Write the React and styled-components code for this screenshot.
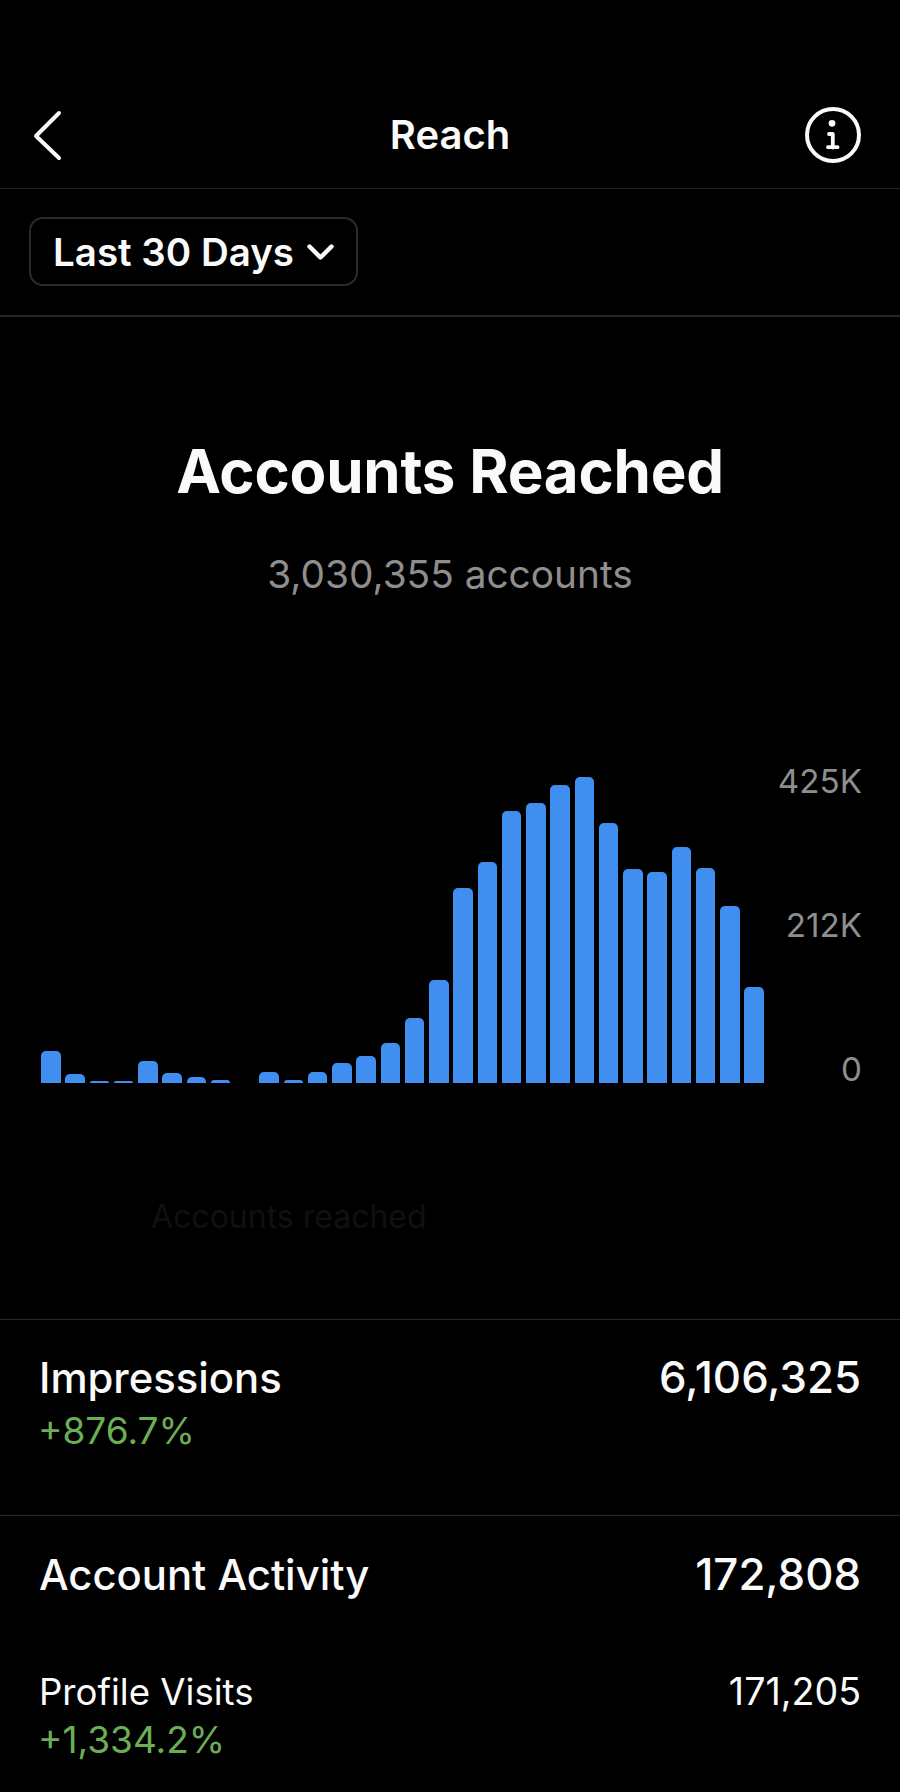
import styled, { createGlobalStyle } from "styled-components";

const GlobalStyle = createGlobalStyle`
  html, body {
    margin: 0;
    background: #000;
  }
  body {
    font-family: "Inter", "Liberation Sans", sans-serif;
    color: #fafafa;
  }
`;

const Page = styled.div`
  width: 900px;
  height: 1792px;
  overflow: hidden;
  background: #000;
`;

const NavBar = styled.header`
  display: grid;
  grid-template-columns: 1fr auto 1fr;
  align-items: center;
  height: 106px;
  padding: 82px 39px 0;
  border-bottom: 1px solid #222;
`;

const NavTitle = styled.h1`
  margin: 0;
  font-size: 40px;
  line-height: 46px;
  font-weight: 600;
`;

const NavIcon = styled.button`
  display: flex;
  padding: 0;
  border: 0;
  background: none;
  color: #fafafa;
  justify-self: ${(p) => (p.$end ? "end" : "start")};
  margin-left: ${(p) => (p.$end ? 0 : -6)}px;
`;

const FilterBar = styled.div`
  height: 98px;
  padding: 28px 0 0 29px;
  border-bottom: 2px solid #262626;
`;

const FilterButton = styled.button`
  display: inline-flex;
  align-items: center;
  gap: 13px;
  height: 69px;
  padding: 0 22px 0 22px;
  box-sizing: border-box;
  border: 2px solid #2b2b2b;
  border-radius: 14px;
  background: #000;
  color: #fafafa;
  font-family: inherit;
  font-size: 38.5px;
  line-height: 44px;
  font-weight: 600;
`;

const Summary = styled.section`
  padding-top: 118px;
  text-align: center;
`;

const SummaryTitle = styled.h2`
  margin: 0;
  font-size: 60px;
  line-height: 72px;
  font-weight: 700;
  letter-spacing: -0.2px;
`;

const SummaryCount = styled.p`
  margin: 44px 0 0;
  font-size: 38.8px;
  line-height: 46px;
  color: #8e8e8e;
`;

const Chart = styled.div`
  display: flex;
  justify-content: space-between;
  height: 320px;
  margin-top: 168px;
  padding: 0 38px 0 41px;
`;

const Bars = styled.div`
  display: grid;
  grid-template-columns: repeat(30, 1fr);
  column-gap: 4.75px;
  align-items: end;
  width: 723px;
  height: 318px;
`;

const Bar = styled.div`
  background: #408ff0;
  border-radius: 5px 5px 0 0;
`;

const Axis = styled.div`
  display: flex;
  flex-direction: column;
  justify-content: space-between;
  text-align: right;
  font-size: 33.2px;
  line-height: 32px;
  color: #8e8e8e;
`;

const GhostRow = styled.div`
  padding: 115px 0 85px 151px;
  font-size: 32px;
  line-height: 34px;
  color: #101010;
  border-bottom: 1px solid #2a2a2a;
`;

const Section = styled.section`
  padding: ${(p) => p.$padding};
  border-bottom: ${(p) => (p.$divided ? "1px solid #2a2a2a" : "none")};
`;

const Row = styled.div`
  display: flex;
  justify-content: space-between;
  align-items: center;
  margin-top: ${(p) => p.$gap || 0}px;
  line-height: 46px;
  font-weight: ${(p) => (p.$detail ? 400 : 500)};
  font-size: ${(p) => (p.$detail ? 36.6 : 41.8)}px;
`;

const Value = styled.span`
  font-size: ${(p) => (p.$detail ? 37.6 : 43.8)}px;
`;

const Change = styled.div`
  margin: ${(p) => p.$gap}px 0 0 -1px;
  font-size: 37px;
  line-height: 42px;
  color: #6bae55;
`;

const reachBars = [
  32, 9, 2, 2, 22, 10, 6, 3, 0, 11, 3, 11, 20, 27, 40, 65, 103, 195, 221, 272,
  280, 298, 306, 260, 214, 211, 236, 215, 177, 96,
];

function BackIcon() {
  return (
    <svg width="30" height="52" viewBox="0 0 30 52" fill="none">
      <path
        d="M26 4 3 27l23 22"
        stroke="currentColor"
        strokeWidth="4"
        strokeLinecap="round"
        strokeLinejoin="round"
      />
    </svg>
  );
}

function InfoIcon() {
  return (
    <svg width="56" height="56" viewBox="0 0 56 56" fill="none">
      <circle cx="28" cy="28" r="26" stroke="currentColor" strokeWidth="4" />
      <circle cx="27" cy="16.3" r="3.4" fill="currentColor" />
      <path
        d="M24 27h3.8v13.6M23 40.2h9.6"
        stroke="currentColor"
        strokeWidth="3.8"
        strokeLinecap="round"
        strokeLinejoin="round"
      />
    </svg>
  );
}

function ChevronIcon() {
  return (
    <svg width="27" height="16" viewBox="0 0 27 16" fill="none">
      <path
        d="M2.5 2.5 13.5 13.5 24.5 2.5"
        stroke="currentColor"
        strokeWidth="4.4"
        strokeLinecap="round"
        strokeLinejoin="round"
      />
    </svg>
  );
}

export default function App() {
  return (
    <Page>
      <GlobalStyle />
      <NavBar>
        <NavIcon>
          <BackIcon />
        </NavIcon>
        <NavTitle>Reach</NavTitle>
        <NavIcon $end>
          <InfoIcon />
        </NavIcon>
      </NavBar>

      <FilterBar>
        <FilterButton>
          Last 30 Days
          <ChevronIcon />
        </FilterButton>
      </FilterBar>

      <Summary>
        <SummaryTitle>Accounts Reached</SummaryTitle>
        <SummaryCount>3,030,355 accounts</SummaryCount>
      </Summary>

      <Chart>
        <Bars>
          {reachBars.map((value, index) => (
            <Bar key={index} style={{ height: value }} />
          ))}
        </Bars>
        <Axis>
          <span>425K</span>
          <span>212K</span>
          <span>0</span>
        </Axis>
      </Chart>
      <GhostRow>Accounts reached</GhostRow>

      <Section $divided $padding="35px 39px 63px">
        <Row>
          <span>Impressions</span>
          <Value>6,106,325</Value>
        </Row>
        <Change $gap={9}>+876.7%</Change>
      </Section>

      <Section $padding="36px 39px 0">
        <Row>
          <span>Account Activity</span>
          <Value>172,808</Value>
        </Row>
        <Row $gap={71} $detail>
          <span>Profile Visits</span>
          <Value $detail>171,205</Value>
        </Row>
        <Change $gap={4}>+1,334.2%</Change>
      </Section>
    </Page>
  );
}
